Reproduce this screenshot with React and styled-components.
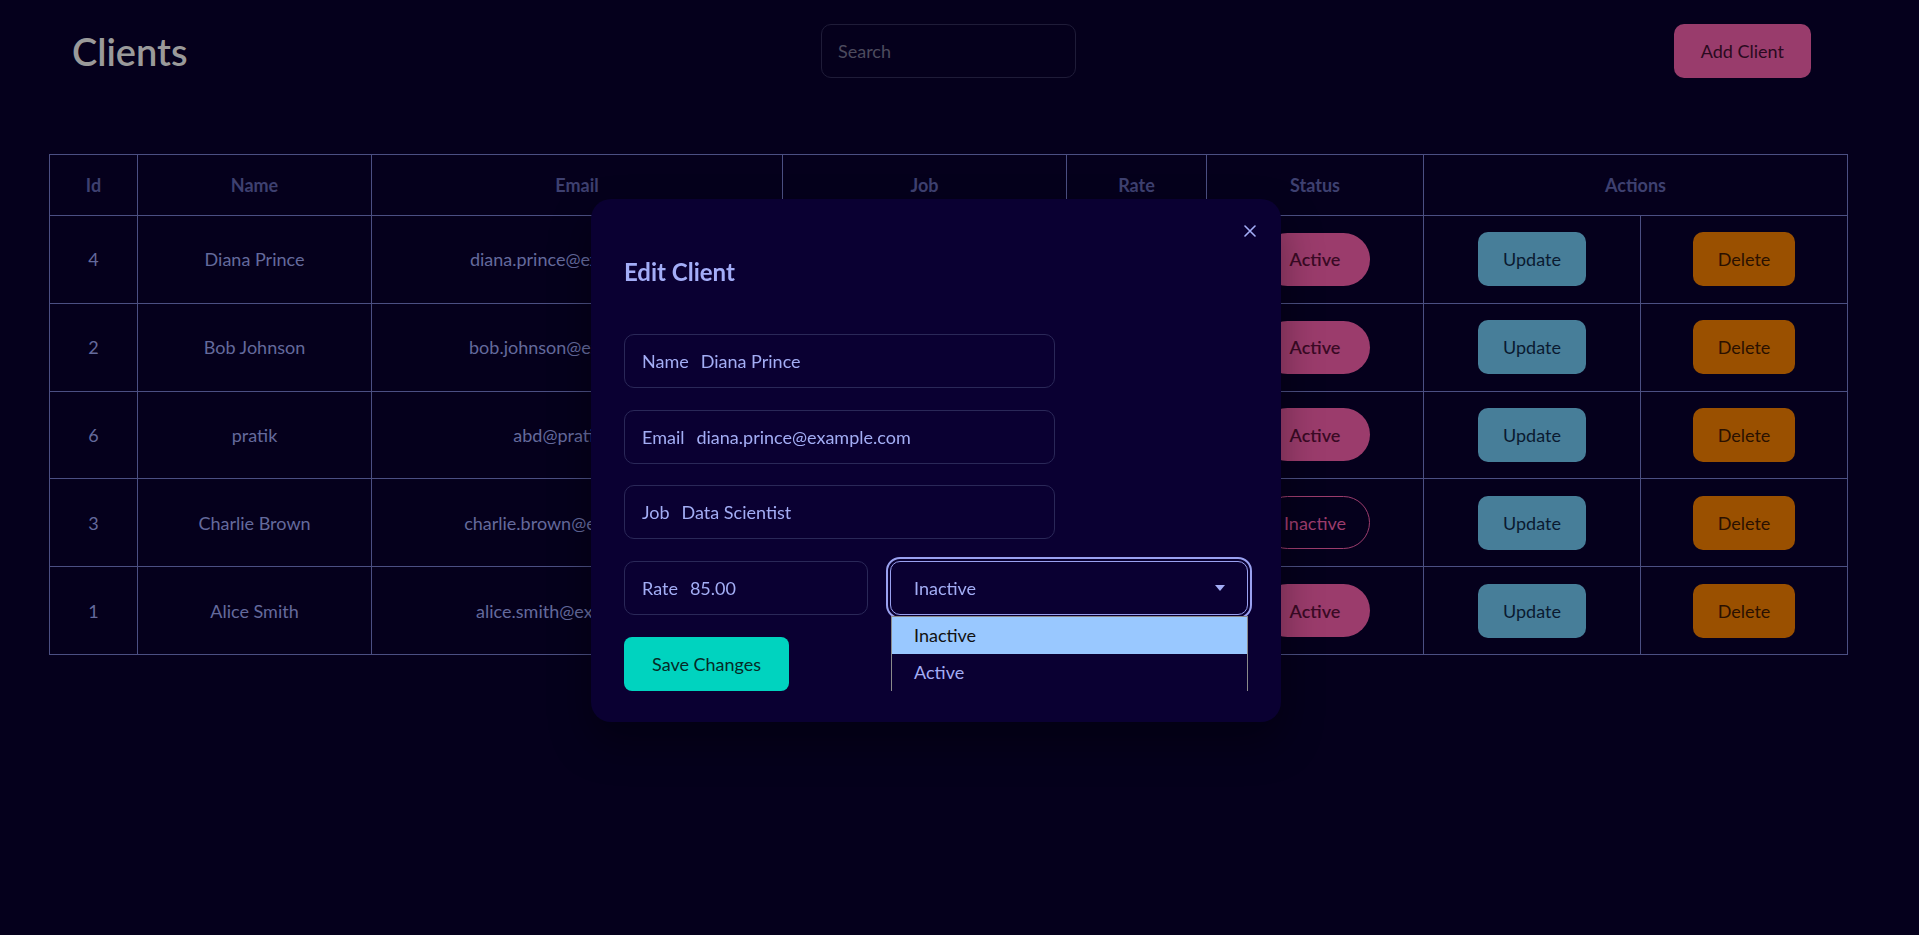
import React, { useState } from 'react'
import styled, { createGlobalStyle, css } from 'styled-components'

const GlobalStyle = createGlobalStyle`
  html, body {
    margin: 0;
    padding: 0;
    background: #05001c;
    font-family: "Segoe UI", Lato, "Noto Sans", sans-serif;
  }
  * {
    box-sizing: border-box;
  }
`

const Page = styled.div`
  min-height: 935px;
  background: #05001c;
`

const Header = styled.header`
  display: grid;
  grid-template-columns: 1fr 255px 1fr;
  align-items: center;
  padding: 24px 94px 0 72px;
`

const Title = styled.h1`
  margin: 0;
  font-size: 38px;
  font-weight: 600;
  color: #9a9a9a;
`

const Search = styled.input`
  height: 54px;
  width: 255px;
  padding: 0 16px;
  background: transparent;
  border: 1px solid #1f1c38;
  border-radius: 10px;
  font-family: inherit;
  font-size: 18px;
  color: #9a9a9a;
  outline: none;

  &::placeholder {
    color: #4c4b5e;
  }
`

const AddButton = styled.button`
  justify-self: end;
  margin-right: 14px;
  height: 54px;
  padding: 0 27px;
  border: none;
  border-radius: 10px;
  background: #993c6c;
  color: #2a0a20;
  font-family: inherit;
  font-size: 18px;
`

const Table = styled.table`
  margin: 76px 0 0 49px;
  width: 1798px;
  border-collapse: collapse;
  table-layout: fixed;
  font-size: 18px;
`

const Th = styled.th`
  height: 61px;
  border: 1px solid #4b4f82;
  color: #3e4070;
  font-weight: 700;
  text-align: center;
`

const Td = styled.td`
  height: 87.8px;
  border: 1px solid #4b4f82;
  color: #646a9c;
  text-align: center;
`

const Pill = styled.span`
  display: inline-flex;
  align-items: center;
  justify-content: center;
  width: 109px;
  height: 53px;
  border-radius: 999px;
  font-weight: 600;
  ${p => p.$active
    ? css`
      background: #9b3c6c;
      color: #3a0a25;
    `
    : css`
      border: 1px solid #9b3c6c;
      color: #9b3c6c;
      font-weight: 400;
    `}
`

const ActionButton = styled.button`
  height: 54px;
  padding: 0 25px;
  border: none;
  border-radius: 10px;
  font-family: inherit;
  font-size: 18px;
  background: ${p => (p.$variant === 'update' ? '#477e99' : '#9a5000')};
  color: ${p => (p.$variant === 'update' ? '#0a1a30' : '#2a1000')};
`

const Overlay = styled.div`
  position: fixed;
  inset: 0;
  display: flex;
  align-items: center;
  justify-content: center;
  padding: 0 47px 14px 0;
`

const Modal = styled.div`
  position: relative;
  width: 690px;
  height: 523px;
  padding: 57px 33px 32px;
  background: #0a0032;
  border-radius: 20px;
  box-shadow: 0 20px 40px rgba(0, 0, 0, 0.35);
`

const CloseButton = styled.button`
  position: absolute;
  top: 22px;
  right: 21px;
  width: 20px;
  height: 20px;
  padding: 0;
  border: none;
  background: transparent;
  display: flex;
  align-items: center;
  justify-content: center;
`

const ModalTitle = styled.h2`
  margin: 0 0 46px;
  height: 32px;
  line-height: 32px;
  font-size: 24px;
  font-weight: 700;
  color: #a3adf7;
`

const Form = styled.form`
  display: flex;
  flex-direction: column;
  gap: 21.7px;
`

const Row = styled.div`
  display: flex;
  gap: 22px;
`

const Field = styled.label`
  display: flex;
  align-items: center;
  gap: 12px;
  width: ${p => p.$width}px;
  height: 54px;
  padding: 0 17px;
  border: 1px solid #2a2858;
  border-radius: 10px;
  font-size: 18px;
  color: #a3adf5;
`

const FieldValue = styled.input`
  flex: 1;
  min-width: 0;
  border: none;
  background: transparent;
  outline: none;
  padding: 0;
  font-family: inherit;
  font-size: 18px;
  color: #a3adf5;
`

const SelectWrap = styled.div`
  position: relative;
  width: 360px;
`

const SelectBox = styled.div`
  display: flex;
  align-items: center;
  justify-content: space-between;
  height: 54px;
  padding: 0 22px 0 23px;
  border: 1px solid #9aa1f0;
  border-radius: 10px;
  outline: 2px solid #9aa1f0;
  outline-offset: 2px;
  font-size: 18px;
  color: #a3adf5;
`

const OptionList = styled.ul`
  position: absolute;
  top: 55px;
  left: 1px;
  right: 0;
  margin: 0;
  padding: 0;
  list-style: none;
  border: 1px solid #8a8a8a;
  border-bottom: none;
  background: #0a0032;
`

const Option = styled.li`
  height: 37px;
  line-height: 37px;
  padding: 0 22px;
  font-size: 18px;
  color: ${p => (p.$selected ? '#111' : '#a3adf5')};
  background: ${p => (p.$selected ? '#99c8ff' : 'transparent')};
`

const SaveButton = styled.button`
  align-self: flex-start;
  height: 54px;
  padding: 0 28px;
  border: none;
  border-radius: 8px;
  background: #00d3bf;
  color: #062a26;
  font-family: inherit;
  font-size: 18px;
`

const clients = [
  { id: 4, name: 'Diana Prince', email: 'diana.prince@example.com', job: 'Data Scientist', rate: '85.00', active: true },
  { id: 2, name: 'Bob Johnson', email: 'bob.johnson@example.com', job: 'Web Developer', rate: '70.00', active: true },
  { id: 6, name: 'pratik', email: 'abd@pratik.com', job: 'Developer', rate: '50.00', active: true },
  { id: 3, name: 'Charlie Brown', email: 'charlie.brown@example.com', job: 'UX Designer', rate: '65.00', active: false },
  { id: 1, name: 'Alice Smith', email: 'alice.smith@example.com', job: 'Software Engineer', rate: '75.00', active: true },
]

const widths = [88, 234, 411, 284, 140, 217, 217, 207]

const App = () => {
  const [form, setForm] = useState({
    name: 'Diana Prince',
    email: 'diana.prince@example.com',
    job: 'Data Scientist',
    rate: '85.00',
  })

  const handleChange = (e) => {
    const { name, value } = e.target
    setForm(prev => ({ ...prev, [name]: value }))
  }

  return (
    <>
      <GlobalStyle />
      <Page>
        <Header>
          <Title>Clients</Title>
          <Search placeholder="Search" />
          <AddButton>Add Client</AddButton>
        </Header>

        <Table>
          <colgroup>
            {widths.map((w, i) => <col key={i} style={{ width: w }} />)}
          </colgroup>
          <thead>
            <tr>
              <Th>Id</Th>
              <Th>Name</Th>
              <Th>Email</Th>
              <Th>Job</Th>
              <Th>Rate</Th>
              <Th>Status</Th>
              <Th colSpan={2}>Actions</Th>
            </tr>
          </thead>
          <tbody>
            {clients.map(c => (
              <tr key={c.id}>
                <Td>{c.id}</Td>
                <Td>{c.name}</Td>
                <Td>{c.email}</Td>
                <Td>{c.job}</Td>
                <Td>{c.rate}</Td>
                <Td>
                  <Pill $active={c.active}>{c.active ? 'Active' : 'Inactive'}</Pill>
                </Td>
                <Td><ActionButton $variant="update">Update</ActionButton></Td>
                <Td><ActionButton $variant="delete">Delete</ActionButton></Td>
              </tr>
            ))}
          </tbody>
        </Table>

        <Overlay>
          <Modal>
            <CloseButton aria-label="Close">
              <svg width="12" height="12" viewBox="0 0 12 12">
                <path d="M1 1L11 11M11 1L1 11" stroke="#a3adf7" strokeWidth="1.6" strokeLinecap="round" />
              </svg>
            </CloseButton>
            <ModalTitle>Edit Client</ModalTitle>
            <Form onSubmit={e => e.preventDefault()}>
              <Field $width={431}>
                Name
                <FieldValue name="name" value={form.name} onChange={handleChange} />
              </Field>
              <Field $width={431}>
                Email
                <FieldValue name="email" value={form.email} onChange={handleChange} />
              </Field>
              <Field $width={431}>
                Job
                <FieldValue name="job" value={form.job} onChange={handleChange} />
              </Field>
              <Row>
                <Field $width={244}>
                  Rate
                  <FieldValue name="rate" value={form.rate} onChange={handleChange} />
                </Field>
                <SelectWrap>
                  <SelectBox>
                    Inactive
                    <svg width="10" height="6" viewBox="0 0 10 6">
                      <path d="M0 0H10L5 6Z" fill="#a3adf5" />
                    </svg>
                  </SelectBox>
                  <OptionList>
                    <Option $selected>Inactive</Option>
                    <Option>Active</Option>
                  </OptionList>
                </SelectWrap>
              </Row>
              <SaveButton type="submit">Save Changes</SaveButton>
            </Form>
          </Modal>
        </Overlay>
      </Page>
    </>
  )
}

export default App
